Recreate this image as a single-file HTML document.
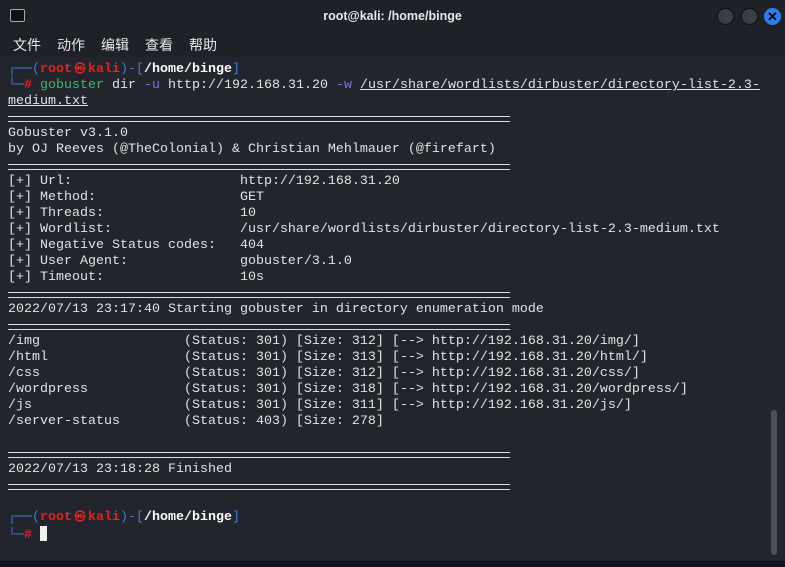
<!DOCTYPE html>
<html><head><meta charset="utf-8"><style>
*{margin:0;padding:0;box-sizing:border-box}
body{width:785px;height:567px;background:#0d1520;overflow:hidden;position:relative;font-family:"Liberation Mono","DejaVu Sans Mono",monospace}
#win{position:absolute;left:0;top:0;width:785px;height:561px;background:#22252c}
#title{position:absolute;left:0;top:0;width:785px;height:33px;background:#1e2127;color:#e8e8e8;font:bold 12.5px "Liberation Sans","DejaVu Sans",sans-serif;text-align:center;line-height:33px}
.tb{position:absolute;top:8px;width:17px;height:17px;border-radius:50%}
#menu{position:absolute;left:0;top:33px;width:785px;height:24px;background:#1e2127;color:#e8e8e8;font:14px "Liberation Sans","Noto Sans CJK SC",sans-serif}
#menu span{position:absolute;top:2px}
#term{position:absolute;left:8px;top:62px;font-size:13.33px;line-height:16px;color:#e2e2e2}
.l{height:16px;white-space:pre}
.sep{height:16px;position:relative}
.sep:after{content:"";position:absolute;left:0;top:6px;width:502px;height:4px;border-top:1px solid #dcdcdc;border-bottom:1px solid #dcdcdc}
.b{color:#3d7be0}.r{color:#e0241c;font-weight:bold}.w{color:#fff;font-weight:bold}.g{color:#3fb86a}.p{color:#7e6ee0}.u{text-decoration:underline}
.k{display:inline-block;width:16px;text-align:center;font-size:11px;color:#e0241c}
#sb{position:absolute;left:771px;top:410px;width:6px;height:145px;background:#4c4f55;border-radius:3px}
</style></head><body>
<div id="win">
<div id="title">root@kali: /home/binge
<div style="position:absolute;left:10px;top:9px;width:15px;height:13px;border:1px solid #aaa;border-radius:2px;background:#111"></div>
<div class="tb" style="left:717px;background:#3a3e46;border:1px solid #111"></div>
<div class="tb" style="left:741px;background:#3a3e46;border:1px solid #111"></div>
<div class="tb" style="left:764px;background:#2b7de9;color:#000;font:bold 13px sans-serif;line-height:17px">✕</div>
</div>
<div id="menu"><span style="left:13px">文件</span><span style="left:57px">动作</span><span style="left:101px">编辑</span><span style="left:145px">查看</span><span style="left:189px">帮助</span></div>
<div id="term">
<div class="l"><span class="b">┌──(</span><span class="r">root<span class="k">㉿</span>kali</span><span class="b">)-[</span><span class="w">/home/binge</span><span class="b">]</span></div>
<div class="l"><span class="b">└─</span><span class="r">#</span> <span class="g">gobuster</span> dir <span class="p">-u</span> http://192.168.31.20 <span class="p">-w</span> <span class="u">/usr/share/wordlists/dirbuster/directory-list-2.3-</span></div>
<div class="l"><span class="u">medium.txt</span></div>
<div class="sep"></div>
<div class="l">Gobuster v3.1.0</div>
<div class="l">by OJ Reeves (@TheColonial) &amp; Christian Mehlmauer (@firefart)</div>
<div class="sep"></div>
<div class="l">[+] Url:                     http://192.168.31.20</div>
<div class="l">[+] Method:                  GET</div>
<div class="l">[+] Threads:                 10</div>
<div class="l">[+] Wordlist:                /usr/share/wordlists/dirbuster/directory-list-2.3-medium.txt</div>
<div class="l">[+] Negative Status codes:   404</div>
<div class="l">[+] User Agent:              gobuster/3.1.0</div>
<div class="l">[+] Timeout:                 10s</div>
<div class="sep"></div>
<div class="l">2022/07/13 23:17:40 Starting gobuster in directory enumeration mode</div>
<div class="sep"></div>
<div class="l">/img                  (Status: 301) [Size: 312] [--&gt; http://192.168.31.20/img/]</div>
<div class="l">/html                 (Status: 301) [Size: 313] [--&gt; http://192.168.31.20/html/]</div>
<div class="l">/css                  (Status: 301) [Size: 312] [--&gt; http://192.168.31.20/css/]</div>
<div class="l">/wordpress            (Status: 301) [Size: 318] [--&gt; http://192.168.31.20/wordpress/]</div>
<div class="l">/js                   (Status: 301) [Size: 311] [--&gt; http://192.168.31.20/js/]</div>
<div class="l">/server-status        (Status: 403) [Size: 278]</div>
<div class="l"></div>
<div class="sep"></div>
<div class="l">2022/07/13 23:18:28 Finished</div>
<div class="sep"></div>
<div class="l"></div>
<div class="l"><span class="b">┌──(</span><span class="r">root<span class="k">㉿</span>kali</span><span class="b">)-[</span><span class="w">/home/binge</span><span class="b">]</span></div>
<div class="l"><span class="b">└─</span><span class="r">#</span> <span style="display:inline-block;width:7px;height:15px;background:#f0f0f0;vertical-align:-3px"></span></div>
</div>
<div id="sb"></div>
</div>
</body></html>
